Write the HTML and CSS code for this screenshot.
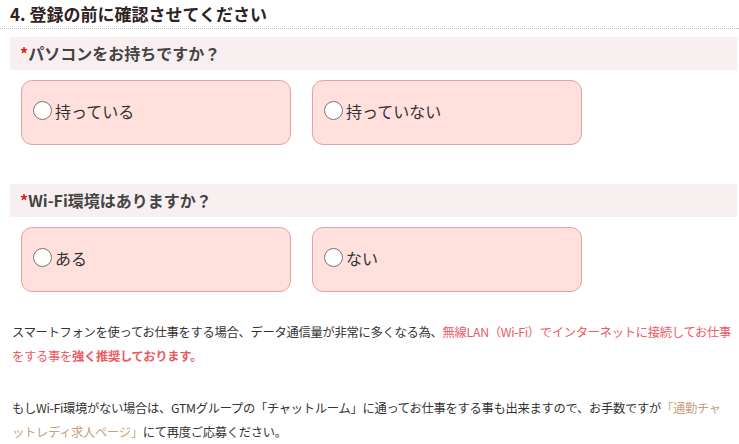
FILE: index.html
```html
<!DOCTYPE html>
<html lang="ja">
<head>
    <meta charset="UTF-8">
    <meta name="viewport" content="width=device-width, initial-scale=1.0">
    <title>登録の前に確認</title>
    <link rel="stylesheet" href="styles.css">
</head>
<body>
    <h2 class="sec_title">4. 登録の前に確認させてください</h2>

    <div class="question">
        <div class="q_title"><span class="req">*</span>パソコンをお持ちですか？</div>
        <div class="choices">
            <label class="choice"><span class="radio"></span>持っている</label>
            <label class="choice"><span class="radio"></span>持っていない</label>
        </div>
    </div>

    <div class="question">
        <div class="q_title"><span class="req">*</span>Wi-Fi環境はありますか？</div>
        <div class="choices">
            <label class="choice"><span class="radio"></span>ある</label>
            <label class="choice"><span class="radio"></span>ない</label>
        </div>
    </div>

    <p class="note">スマートフォンを使ってお仕事をする場合、データ通信量が非常に多くなる為、<span class="red">無線LAN（Wi-Fi）でインターネットに接続してお仕事をする事を<b>強く推奨しております。</b></span></p>

    <p class="note note2">もしWi-Fi環境がない場合は、GTMグループの「チャットルーム」に通ってお仕事をする事も出来ますので、お手数ですが<a class="link" href="#">「通勤チャットレディ求人ページ」</a>にて再度ご応募ください。</p>
</body>
</html>
```

FILE: styles.css
```css
body{
    margin:0;
    font-family: "Noto Sans CJK JP", "Noto Sans", sans-serif;
    color:#333;
    background:#fff;
}

.sec_title{
    margin:0;
    padding:2px 10px 0;
    height:26px;
    font-size:17px;
    line-height:24px;
    font-weight:bold;
    color:#2e2222;
    border-bottom:1px dotted #b8b8b8;
}

.question{
    margin-top:8px;
    margin-left:10px;
    margin-right:2px;
}

.question + .question{
    margin-top:39px;
}

.q_title{
    background:#f8f0f0;
    height:33px;
    line-height:32px;
    padding-left:10px;
    font-size:16px;
    font-weight:bold;
    color:#444;
}

.req{
    color:#e02020;
}

.choices{
    display:flex;
    gap:21px;
    margin-top:10px;
    margin-left:11px;
}

.choice{
    display:flex;
    align-items:center;
    box-sizing:border-box;
    width:270px;
    height:65px;
    padding-left:11px;
    padding-bottom:4px;
    background:#ffe0dd;
    border:1px solid #e3a3a3;
    border-radius:11px;
    font-size:16px;
    color:#333;
}

.radio{
    display:inline-block;
    box-sizing:border-box;
    width:19px;
    height:19px;
    margin-right:3px;
    border:1px solid #767676;
    border-radius:50%;
    background:#fff;
}

.note{
    margin:28px 0 0;
    padding:0 4px 0 12px;
    font-size:12.3px;
    letter-spacing:-0.3px;
    line-height:24px;
    color:#333;
}

.note2{
    margin-top:28px;
    padding-right:8px;
}

.red{
    color:#ec5a63;
}

.red b{
    font-weight:bold;
}

.link{
    color:#c9a07c;
    text-decoration:none;
}
```
